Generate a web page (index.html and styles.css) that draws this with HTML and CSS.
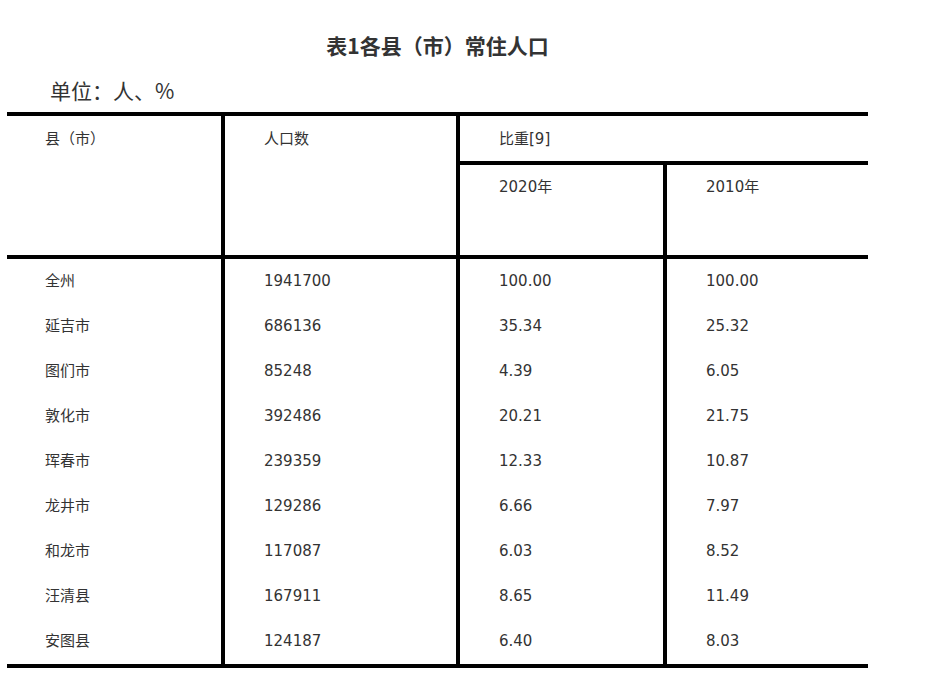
FILE: index.html
```html
<!DOCTYPE html>
<html lang="zh-CN">
<head>
<meta charset="utf-8">
<title>表1各县（市）常住人口</title>
<link rel="stylesheet" href="styles.css">
</head>
<body>
<div class="page">
  <h1 class="title">表1各县（市）常住人口</h1>
  <p class="unit">单位：人、%</p>
  <div class="table">
    <div class="cell c1 hcell span2 bb">县（市）</div>
    <div class="cell c2 hcell span2 bl bb">人口数</div>
    <div class="cell c3 hcell wide bl bb">比重[9]</div>
    <div class="cell c3 hcell2 bl bb">2020年</div>
    <div class="cell c4 hcell2 bl bb">2010年</div>

    <div class="cell c1">全州</div><div class="cell c2 bl">1941700</div><div class="cell c3 bl">100.00</div><div class="cell c4 bl">100.00</div>
    <div class="cell c1">延吉市</div><div class="cell c2 bl">686136</div><div class="cell c3 bl">35.34</div><div class="cell c4 bl">25.32</div>
    <div class="cell c1">图们市</div><div class="cell c2 bl">85248</div><div class="cell c3 bl">4.39</div><div class="cell c4 bl">6.05</div>
    <div class="cell c1">敦化市</div><div class="cell c2 bl">392486</div><div class="cell c3 bl">20.21</div><div class="cell c4 bl">21.75</div>
    <div class="cell c1">珲春市</div><div class="cell c2 bl">239359</div><div class="cell c3 bl">12.33</div><div class="cell c4 bl">10.87</div>
    <div class="cell c1">龙井市</div><div class="cell c2 bl">129286</div><div class="cell c3 bl">6.66</div><div class="cell c4 bl">7.97</div>
    <div class="cell c1">和龙市</div><div class="cell c2 bl">117087</div><div class="cell c3 bl">6.03</div><div class="cell c4 bl">8.52</div>
    <div class="cell c1">汪清县</div><div class="cell c2 bl">167911</div><div class="cell c3 bl">8.65</div><div class="cell c4 bl">11.49</div>
    <div class="cell c1">安图县</div><div class="cell c2 bl">124187</div><div class="cell c3 bl">6.40</div><div class="cell c4 bl">8.03</div>
  </div>
</div>
</body>
</html>
```

FILE: styles.css
```css
* {
  box-sizing: border-box;
}

html, body {
  margin: 0;
  padding: 0;
  background: #ffffff;
}

body {
  font-family: "DejaVu Sans", "Noto Sans CJK SC", sans-serif;
  color: #333333;
}

.page {
  width: 861px;
  margin-left: 7px;
  padding-top: 30px;
}

.title {
  margin: 0;
  font-family: "Noto Sans CJK SC", sans-serif;
  font-size: 21px;
  font-weight: 700;
  line-height: 30px;
  text-align: center;
  color: #333333;
}

.unit {
  margin: 15px 0 0 0;
  padding-left: 43px;
  font-family: "Noto Sans CJK SC", sans-serif;
  font-size: 21px;
  line-height: 30px;
  color: #333333;
}

.table {
  margin-top: 7px;
  display: grid;
  grid-template-columns: 214px 235px 207px 205px;
  border-top: 4px solid #000000;
  border-bottom: 4px solid #000000;
}

.cell {
  font-size: 15px;
  line-height: 22px;
  padding-top: 11px;
  padding-bottom: 12px;
  padding-left: 38px;
  white-space: nowrap;
}

.c2, .c3, .c4 {
  padding-left: 39px;
}

.bl {
  border-left: 4px solid #000000;
}

.bb {
  border-bottom: 4px solid #000000;
}

.hcell {
  padding-top: 12px;
  padding-bottom: 11px;
}

.span2 {
  grid-row: span 2;
}

.wide {
  grid-column: span 2;
}

.hcell2 {
  padding-top: 11px;
  padding-bottom: 57px;
}
```
